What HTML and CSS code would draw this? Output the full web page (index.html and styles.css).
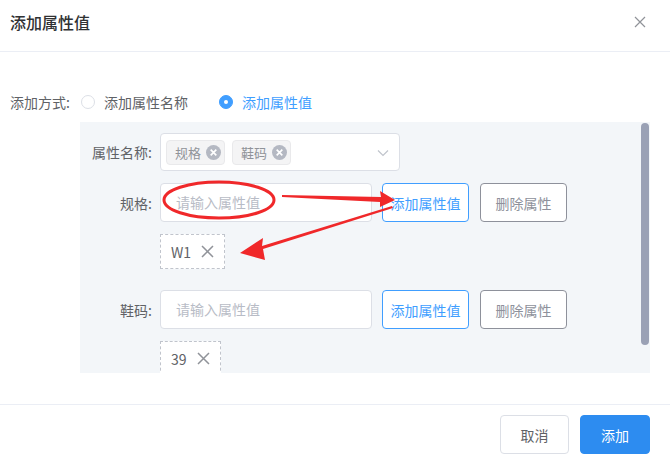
FILE: index.html
```html
<!DOCTYPE html>
<html lang="zh">
<head>
    <meta charset="UTF-8">
    <meta name="viewport" content="width=device-width, initial-scale=1.0">
    <title>添加属性值</title>
    <link rel="stylesheet" href="styles.css">
</head>
<body>
    <div class="dialog">
        <div class="dialog-header">
            <span class="dialog-title">添加属性值</span>
            <svg class="dialog-close" width="12" height="12" viewBox="0 0 12 12">
                <path d="M1 1 L11 11 M11 1 L1 11" stroke="#909399" stroke-width="1.2" fill="none"/>
            </svg>
        </div>

        <div class="dialog-body">
            <div class="mode-row">
                <span class="mode-label">添加方式:</span>
                <label class="radio">
                    <span class="radio-dot"></span>
                    <span>添加属性名称</span>
                </label>
                <label class="radio checked">
                    <span class="radio-dot"></span>
                    <span>添加属性值</span>
                </label>
            </div>

            <div class="attr-panel">
                <div class="form-item">
                    <span class="form-label">属性名称:</span>
                    <div class="select">
                        <span class="select-tag">规格
                            <svg class="tag-close" width="15" height="15" viewBox="0 0 16 16">
                                <circle cx="8" cy="8" r="8" fill="#b4b8c2"/>
                                <path d="M5 5 L11 11 M11 5 L5 11" stroke="#fff" stroke-width="1.8"/>
                            </svg>
                        </span>
                        <span class="select-tag">鞋码
                            <svg class="tag-close" width="15" height="15" viewBox="0 0 16 16">
                                <circle cx="8" cy="8" r="8" fill="#b4b8c2"/>
                                <path d="M5 5 L11 11 M11 5 L5 11" stroke="#fff" stroke-width="1.8"/>
                            </svg>
                        </span>
                        <svg class="select-arrow" width="12" height="8" viewBox="0 0 12 8">
                            <path d="M1 1.5 L6 6.5 L11 1.5" stroke="#c0c4cc" stroke-width="1.2" fill="none"/>
                        </svg>
                    </div>
                </div>

                <div class="form-item">
                    <span class="form-label">规格:</span>
                    <div class="input">请输入属性值</div>
                    <button class="btn btn-outline-primary">添加属性值</button>
                    <button class="btn btn-outline">删除属性</button>
                </div>
                <div class="values">
                    <span class="value-tag">W1
                        <svg class="value-close" width="13" height="13" viewBox="0 0 13 13">
                            <path d="M1 1 L12 12 M12 1 L1 12" stroke="#909399" stroke-width="1.5"/>
                        </svg>
                    </span>
                </div>

                <div class="form-item">
                    <span class="form-label">鞋码:</span>
                    <div class="input">请输入属性值</div>
                    <button class="btn btn-outline-primary">添加属性值</button>
                    <button class="btn btn-outline">删除属性</button>
                </div>
                <div class="values">
                    <span class="value-tag">39
                        <svg class="value-close" width="13" height="13" viewBox="0 0 13 13">
                            <path d="M1 1 L12 12 M12 1 L1 12" stroke="#909399" stroke-width="1.5"/>
                        </svg>
                    </span>
                </div>

                <div class="scrollbar"></div>
            </div>
        </div>

        <div class="dialog-footer">
            <button class="btn btn-cancel">取消</button>
            <button class="btn btn-primary">添加</button>
        </div>

        <!-- annotations -->
        <svg class="marks" width="670" height="464" viewBox="0 0 670 464">
            <ellipse cx="219" cy="200" rx="55" ry="18" stroke="#f0282a" stroke-width="3" fill="none"/>
            <path d="M282 195 L381 197 L380 191 L395 200 L380 207 L380 202 L282 197 Z" fill="#f0282a"/>
            <path d="M392 206 L262 246 L263 238 L240 253 L265 260 L263 249 L393 208 Z" fill="#f0282a"/>
        </svg>
    </div>
</body>
</html>
```

FILE: styles.css
```css
* { margin: 0; padding: 0; box-sizing: border-box; }
body {
    font-family: "Noto Sans CJK SC", "Liberation Sans", sans-serif;
    font-size: 14px;
    color: #606266;
    background: #fff;
}
.dialog {
    position: relative;
    width: 670px;
    height: 464px;
    overflow: hidden;
}
.dialog-header {
    height: 52px;
    padding: 0 24px 7px 10px;
    display: flex;
    align-items: center;
    justify-content: space-between;
    border-bottom: 1px solid #ebeef5;
}
.dialog-title {
    font-size: 16px;
    font-weight: 500;
    color: #303133;
}
.dialog-body {
    padding-top: 40px;
    height: 352px;
}
.mode-row {
    display: flex;
    align-items: center;
    height: 20px;
    padding-left: 10px;
    margin-bottom: 10px;
}
.mode-label {
    width: 71px;
    color: #606266;
}
.radio {
    display: flex;
    align-items: center;
    margin-right: 31px;
    color: #606266;
}
.radio-dot {
    width: 14px;
    height: 14px;
    border: 1px solid #dcdfe6;
    border-radius: 50%;
    margin-right: 9px;
    background: #fff;
}
.radio.checked { color: #409eff; }
.radio.checked .radio-dot {
    border-color: #409eff;
    background: #409eff;
    position: relative;
}
.radio.checked .radio-dot::after {
    content: "";
    position: absolute;
    left: 4px;
    top: 4px;
    width: 4px;
    height: 4px;
    border-radius: 50%;
    background: #fff;
}
.attr-panel {
    position: relative;
    margin-left: 80px;
    width: 570px;
    height: 251px;
    background: #f3f6f9;
    padding-top: 11px;
    overflow: hidden;
}
.form-item {
    display: flex;
    align-items: center;
    margin-bottom: 12px;
}
.form-label {
    width: 80px;
    padding-right: 8px;
    text-align: right;
    color: #606266;
}
.select {
    position: relative;
    width: 240px;
    height: 38px;
    background: #fff;
    border: 1px solid #dcdfe6;
    border-radius: 4px;
    display: flex;
    align-items: center;
    padding-left: 5px;
    gap: 7px;
}
.select-tag {
    display: flex;
    align-items: center;
    height: 25px;
    padding: 0 3px 0 8px;
    background: #f4f4f5;
    border: 1px solid #e9e9eb;
    border-radius: 4px;
    color: #909399;
    font-size: 13px;
}
.tag-close {
    margin-left: 5px;
}
.select-arrow {
    position: absolute;
    right: 10px;
    top: 15px;
}
.input {
    width: 212px;
    height: 39px;
    background: #fff;
    border: 1px solid #dcdfe6;
    border-radius: 4px;
    padding-left: 15px;
    line-height: 37px;
    color: #b8bcc6;
}
.btn {
    font-family: inherit;
    font-size: 14px;
    height: 39px;
    border-radius: 4px;
    background: #fff;
    cursor: pointer;
}
.btn-outline-primary {
    width: 87px;
    margin-left: 10px;
    border: 1px solid #409eff;
    color: #409eff;
}
.btn-outline {
    width: 87px;
    margin-left: 11px;
    border: 1px solid #8e919b;
    color: #8e919b;
}
.values {
    padding-left: 80px;
    margin-bottom: 21px;
}
.value-tag {
    display: inline-flex;
    align-items: center;
    height: 35px;
    padding: 0 10px;
    background: #fff;
    border: 1px dashed #c0c4cc;
    color: #606266;
}
.value-close {
    margin-left: 10px;
}
.scrollbar {
    position: absolute;
    left: 561px;
    top: 1px;
    width: 8px;
    height: 222px;
    border-radius: 4px;
    background: #9aa1b5;
}
.dialog-footer {
    border-top: 1px solid #ebeef5;
    height: 60px;
    padding: 10px 20px 0 0;
    display: flex;
    justify-content: flex-end;
    gap: 11px;
}
.btn-cancel {
    width: 69px;
    border: 1px solid #dcdfe6;
    color: #606266;
}
.btn-primary {
    width: 70px;
    border: 1px solid #2d8cf0;
    background: #2d8cf0;
    color: #fff;
}
.marks {
    position: absolute;
    left: 0;
    top: 0;
    pointer-events: none;
}
```
